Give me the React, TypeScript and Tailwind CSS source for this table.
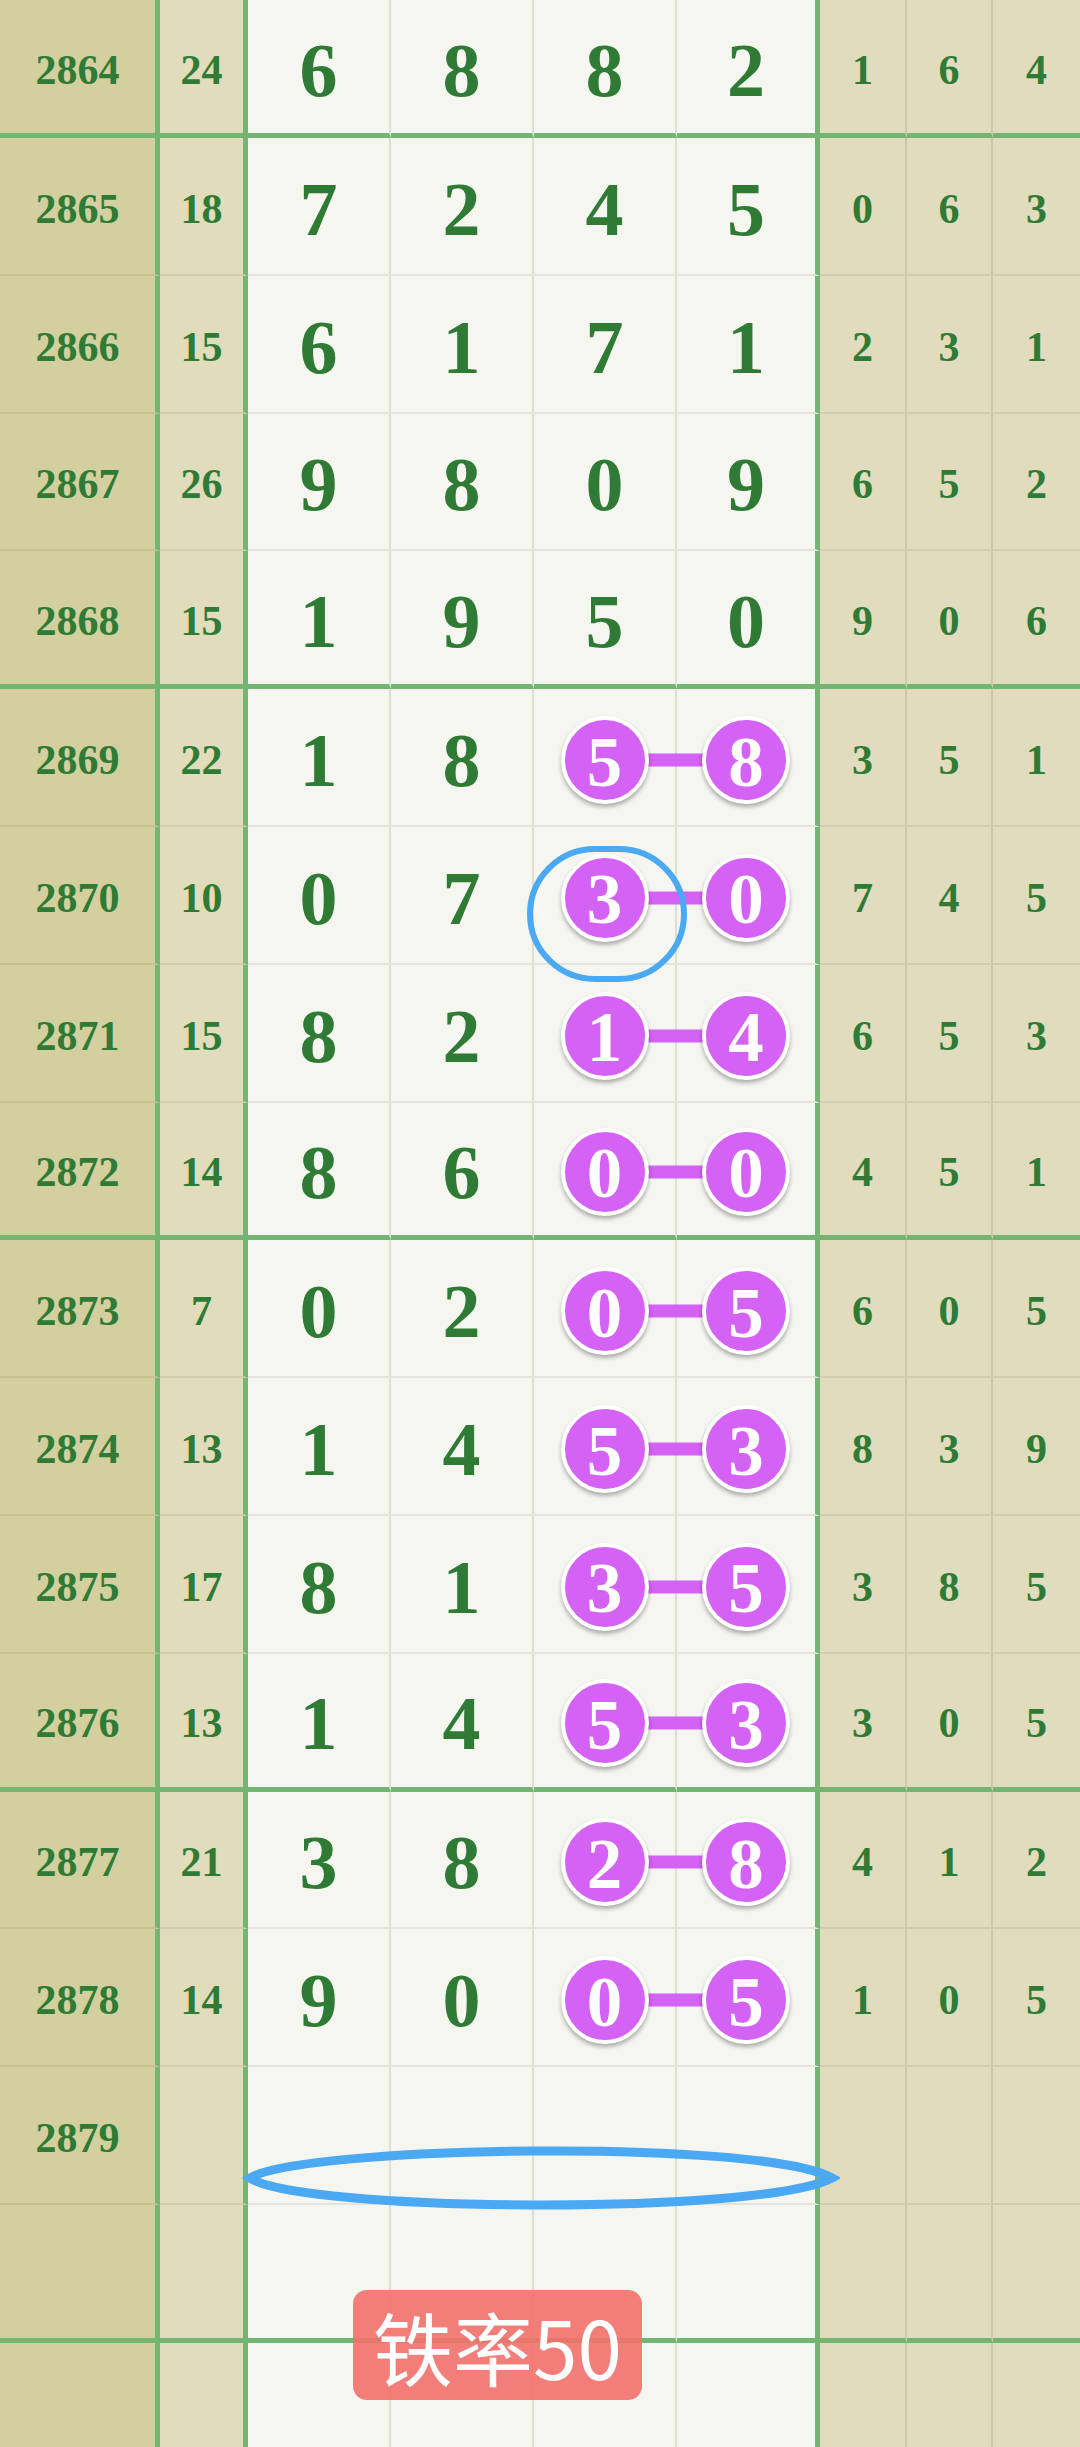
import React from 'react';

type Row = {
  issue: string;
  sum: string;
  main: string[];
  balls?: [string, string];
  tail: string[];
};

const rows: Row[] = [
  { issue: '2864', sum: '24', main: ['6', '8', '8', '2'], tail: ['1', '6', '4'] },
  { issue: '2865', sum: '18', main: ['7', '2', '4', '5'], tail: ['0', '6', '3'] },
  { issue: '2866', sum: '15', main: ['6', '1', '7', '1'], tail: ['2', '3', '1'] },
  { issue: '2867', sum: '26', main: ['9', '8', '0', '9'], tail: ['6', '5', '2'] },
  { issue: '2868', sum: '15', main: ['1', '9', '5', '0'], tail: ['9', '0', '6'] },
  { issue: '2869', sum: '22', main: ['1', '8'], balls: ['5', '8'], tail: ['3', '5', '1'] },
  { issue: '2870', sum: '10', main: ['0', '7'], balls: ['3', '0'], tail: ['7', '4', '5'] },
  { issue: '2871', sum: '15', main: ['8', '2'], balls: ['1', '4'], tail: ['6', '5', '3'] },
  { issue: '2872', sum: '14', main: ['8', '6'], balls: ['0', '0'], tail: ['4', '5', '1'] },
  { issue: '2873', sum: '7', main: ['0', '2'], balls: ['0', '5'], tail: ['6', '0', '5'] },
  { issue: '2874', sum: '13', main: ['1', '4'], balls: ['5', '3'], tail: ['8', '3', '9'] },
  { issue: '2875', sum: '17', main: ['8', '1'], balls: ['3', '5'], tail: ['3', '8', '5'] },
  { issue: '2876', sum: '13', main: ['1', '4'], balls: ['5', '3'], tail: ['3', '0', '5'] },
  { issue: '2877', sum: '21', main: ['3', '8'], balls: ['2', '8'], tail: ['4', '1', '2'] },
  { issue: '2878', sum: '14', main: ['9', '0'], balls: ['0', '5'], tail: ['1', '0', '5'] },
  { issue: '2879', sum: '', main: ['', '', '', ''], tail: ['', '', ''] },
  { issue: '', sum: '', main: ['', '', '', ''], tail: ['', '', ''] },
  { issue: '', sum: '', main: ['', '', '', ''], tail: ['', '', ''] },
];

const serif = "font-['Liberation_Serif',serif] font-bold text-[#2f7b36]";

const Ball = ({ n }: { n: string }) => (
  <div className="relative z-10 flex h-[88px] w-[88px] items-center justify-center rounded-full border-[4px] border-white bg-[#d462f5] shadow-[0_3px_4px_rgba(0,0,0,0.3)]">
    <span className="pt-[4px] font-['Liberation_Serif',serif] text-[71px] font-bold leading-none text-white">{n}</span>
  </div>
);

const App: React.FC = () => {
  return (
    <div className="relative h-[2447px] w-[1080px] overflow-hidden bg-[#f5f6f0]">
      {rows.map((r, i) => {
        const thick = i % 4 === 0;
        const last = i === rows.length - 1;
        const hb = last ? '' : thick ? 'border-b-[5px] border-b-[#74b574]' : 'border-b-2 border-b-[#00000012]';
        const h = i === 0 ? 'h-[138px]' : last ? 'h-[110px]' : 'h-[137.8px]';
        return (
          <div key={i} className={`flex ${h}`}>
            {/* issue + sum */}
            <div className={`flex w-[160px] items-center justify-center border-r-[5px] border-r-[#74b574] bg-[#d3cf9f] pt-[6px] text-[42px] leading-none ${serif} ${hb}`}>
              {r.issue}
            </div>
            <div className={`flex w-[88px] items-center justify-center border-r-[5px] border-r-[#74b574] bg-[#e0dcbc] pt-[6px] text-[42px] leading-none ${serif} ${hb}`}>
              {r.sum}
            </div>

            {/* main digits */}
            <div className={`flex w-[143px] items-center justify-center border-r-2 border-r-[#dbe0d4] pt-[6px] text-[76px] leading-none ${serif} ${hb}`}>
              {r.main[0]}
            </div>
            <div className={`flex w-[143px] items-center justify-center border-r-2 border-r-[#dbe0d4] pt-[6px] text-[76px] leading-none ${serif} ${hb}`}>
              {r.main[1]}
            </div>
            <div className={`relative flex w-[143px] items-center justify-center border-r-2 border-r-[#dbe0d4] pt-[6px] text-[76px] leading-none ${serif} ${hb}`}>
              {r.balls ? (
                <>
                  <div className="absolute left-1/2 top-1/2 mt-[3px] h-[13px] w-[143px] -translate-y-1/2 bg-[#d462f5]" />
                  <Ball n={r.balls[0]} />
                </>
              ) : (
                r.main[2]
              )}
            </div>
            <div className={`flex w-[143px] items-center justify-center border-r-[5px] border-r-[#74b574] pt-[6px] text-[76px] leading-none ${serif} ${hb}`}>
              {r.balls ? <Ball n={r.balls[1]} /> : r.main[3]}
            </div>

            {/* tail digits */}
            <div className={`flex w-[87px] items-center justify-center border-r-2 border-r-[#cbc9a8] bg-[#e0dcbd] pt-[6px] text-[42px] leading-none ${serif} ${hb}`}>
              {r.tail[0]}
            </div>
            <div className={`flex w-[86px] items-center justify-center border-r-2 border-r-[#cbc9a8] bg-[#e0dcbd] pt-[6px] text-[42px] leading-none ${serif} ${hb}`}>
              {r.tail[1]}
            </div>
            <div className={`flex w-[87px] items-center justify-center bg-[#e0dcbd] pt-[6px] text-[42px] leading-none ${serif} ${hb}`}>
              {r.tail[2]}
            </div>
          </div>
        );
      })}

      {/* hand-drawn annotations */}
      <div className="absolute left-[527px] top-[846px] z-20 h-[136px] w-[160px] rounded-full border-[6px] border-[#4aa9f2]" />
      <svg className="absolute left-[240px] top-[2130px] z-20" width="600" height="100" viewBox="0 0 600 100">
        <path d="M10 48 C 60 16, 520 8, 592 48 C 520 86, 60 82, 10 48 Z" fill="none" stroke="#4aa9f2" strokeWidth="9" />
      </svg>

      <div className="absolute left-[353px] top-[2290px] z-20 flex h-[110px] w-[289px] items-center justify-center rounded-[14px] bg-[#f3706a]/90 font-['Noto_Sans_CJK_SC',sans-serif] text-[80px] leading-none text-white">
        铁率50
      </div>
    </div>
  );
};

export default App;
